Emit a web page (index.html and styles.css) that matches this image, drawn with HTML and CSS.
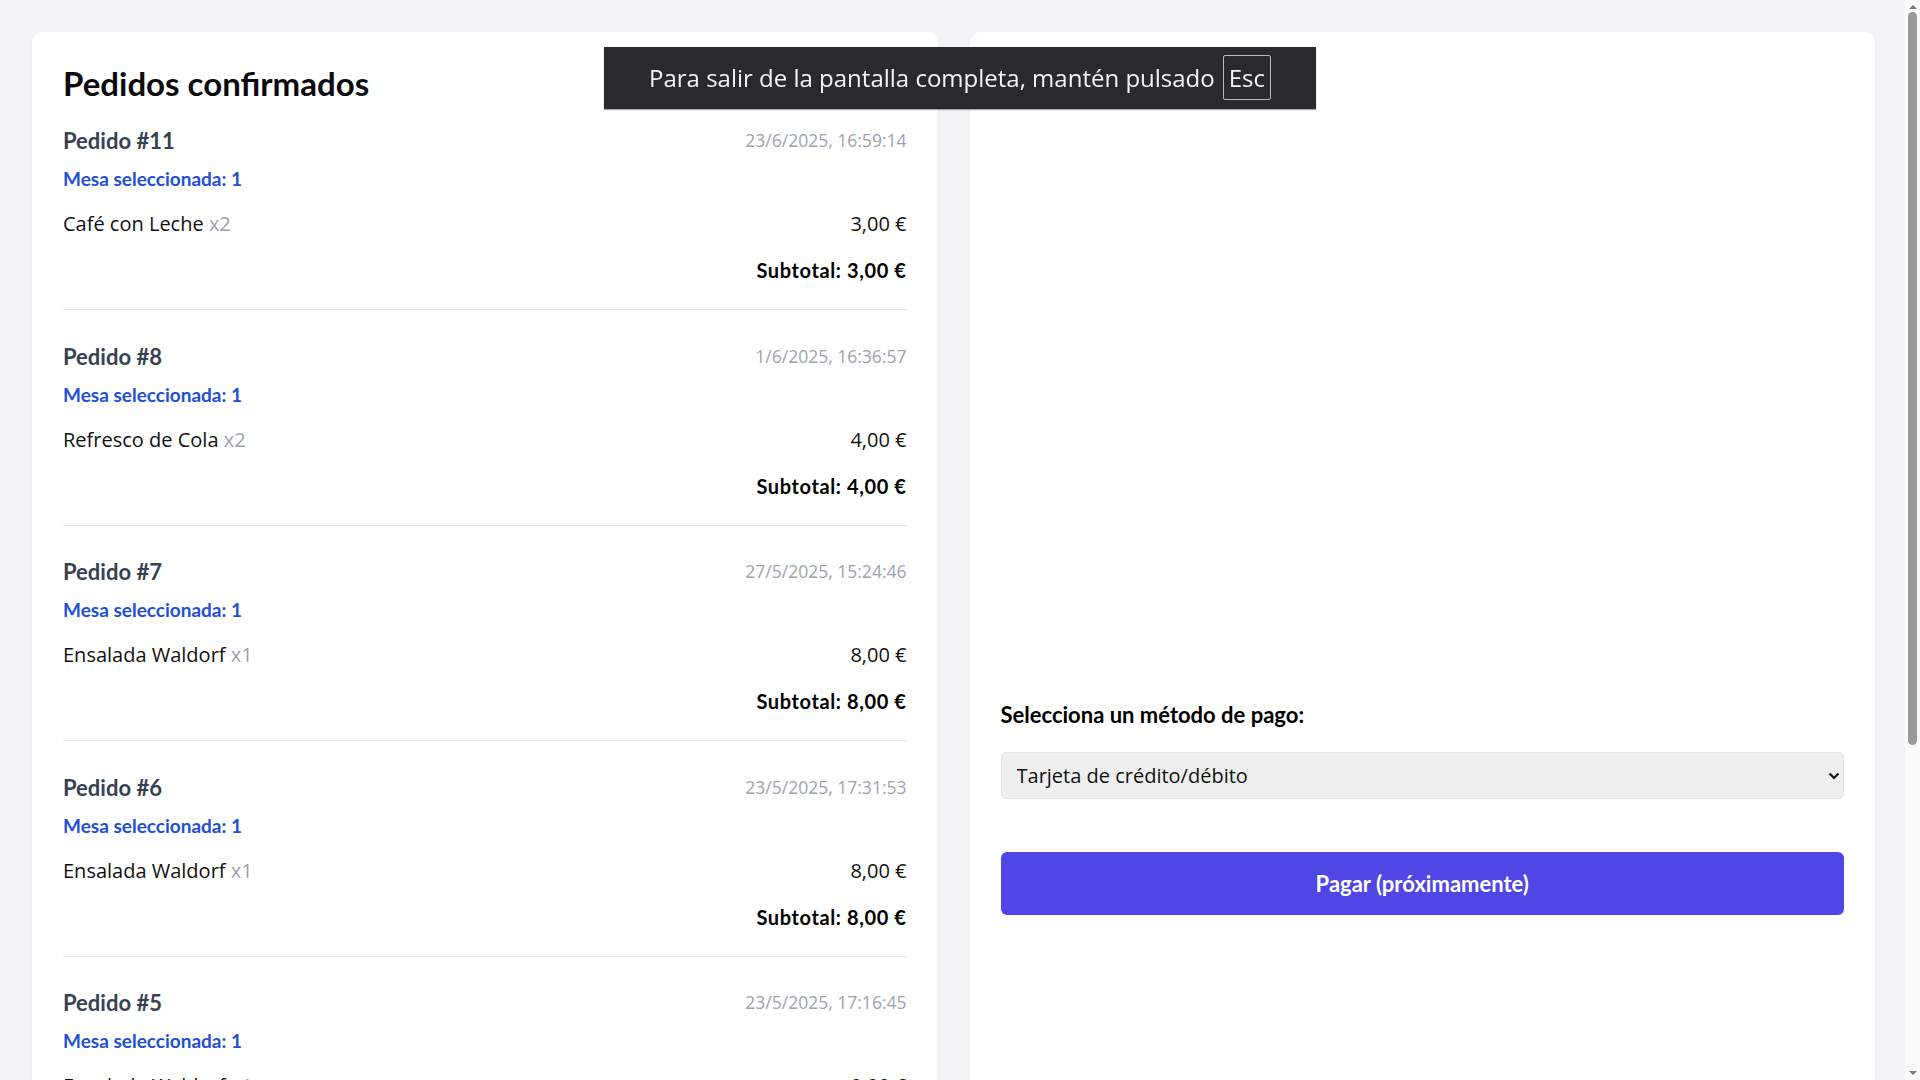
FILE: index.html
```html
<!DOCTYPE html>
<html lang="es">
<head>
    <meta charset="UTF-8">
    <meta name="viewport" content="width=device-width, initial-scale=1.0">
    <title>Pedidos confirmados</title>
    <link rel="stylesheet" href="styles.css">
</head>
<body>
    <div class="page">
        <section class="card orders">
            <h2 class="title">Pedidos confirmados</h2>

            <div class="order">
                <div class="order-head">
                    <span class="order-id">Pedido #11</span>
                    <span class="order-date">23/6/2025, 16:59:14</span>
                </div>
                <div class="order-table">Mesa seleccionada: 1</div>
                <div class="order-item">
                    <span>Café con Leche <span class="qty">x2</span></span>
                    <span>3,00 €</span>
                </div>
                <div class="order-subtotal">Subtotal: 3,00 €</div>
            </div>

            <div class="order">
                <div class="order-head">
                    <span class="order-id">Pedido #8</span>
                    <span class="order-date">1/6/2025, 16:36:57</span>
                </div>
                <div class="order-table">Mesa seleccionada: 1</div>
                <div class="order-item">
                    <span>Refresco de Cola <span class="qty">x2</span></span>
                    <span>4,00 €</span>
                </div>
                <div class="order-subtotal">Subtotal: 4,00 €</div>
            </div>

            <div class="order">
                <div class="order-head">
                    <span class="order-id">Pedido #7</span>
                    <span class="order-date">27/5/2025, 15:24:46</span>
                </div>
                <div class="order-table">Mesa seleccionada: 1</div>
                <div class="order-item">
                    <span>Ensalada Waldorf <span class="qty">x1</span></span>
                    <span>8,00 €</span>
                </div>
                <div class="order-subtotal">Subtotal: 8,00 €</div>
            </div>

            <div class="order">
                <div class="order-head">
                    <span class="order-id">Pedido #6</span>
                    <span class="order-date">23/5/2025, 17:31:53</span>
                </div>
                <div class="order-table">Mesa seleccionada: 1</div>
                <div class="order-item">
                    <span>Ensalada Waldorf <span class="qty">x1</span></span>
                    <span>8,00 €</span>
                </div>
                <div class="order-subtotal">Subtotal: 8,00 €</div>
            </div>

            <div class="order">
                <div class="order-head">
                    <span class="order-id">Pedido #5</span>
                    <span class="order-date">23/5/2025, 17:16:45</span>
                </div>
                <div class="order-table">Mesa seleccionada: 1</div>
                <div class="order-item">
                    <span>Ensalada Waldorf <span class="qty">x1</span></span>
                    <span>8,00 €</span>
                </div>
                <div class="order-subtotal">Subtotal: 8,00 €</div>
            </div>

            <div class="order">
                <div class="order-head">
                    <span class="order-id">Pedido #4</span>
                    <span class="order-date">23/5/2025, 16:58:02</span>
                </div>
                <div class="order-table">Mesa seleccionada: 1</div>
                <div class="order-item">
                    <span>Café con Leche <span class="qty">x1</span></span>
                    <span>1,50 €</span>
                </div>
                <div class="order-subtotal">Subtotal: 1,50 €</div>
            </div>
        </section>

        <section class="card payment">
            <div class="pay-spacer"></div>
            <label class="pay-label" for="metodo">Selecciona un método de pago:</label>
            <div class="select-wrap">
                <select class="pay-select" id="metodo">
                    <option>Tarjeta de crédito/débito</option>
                    <option>Efectivo</option>
                </select>
                <svg class="chevron" width="12" height="8" viewBox="0 0 12 8">
                    <path d="M1.5 1.5 L6 6 L10.5 1.5" fill="none" stroke="#111" stroke-width="2.2"/>
                </svg>
            </div>
            <button class="pay-btn">Pagar (próximamente)</button>
        </section>
    </div>

    <div class="fs-toast">
        <span>Para salir de la pantalla completa, mantén pulsado</span>
        <span class="key">Esc</span>
    </div>

    <div class="scrollbar">
        <span class="arrow up"></span>
        <span class="thumb"></span>
        <span class="arrow down"></span>
    </div>
</body>
</html>
```

FILE: styles.css
```css
* {
    box-sizing: border-box;
}
body {
    margin: 0;
    background-color: #f3f4f6;
    font-family: 'Open Sans', sans-serif;
    color: #111827;
}
.page {
    display: grid;
    grid-template-columns: 1fr 1fr;
    gap: 32px;
    padding: 32px 45px 32px 32px;
}
.card {
    background: #fff;
    border-radius: 10px;
    box-shadow: 0 1px 3px rgba(0, 0, 0, 0.06);
    padding: 30px 31px;
}
.title {
    margin: 0 0 18px;
    font-family: 'Lato', sans-serif;
    font-weight: 700;
    font-size: 33px;
    line-height: 43px;
    color: #0b0b0f;
}
.order {
    padding-bottom: 24px;
    border-bottom: 1px solid #e5e7eb;
    margin-bottom: 28.5px;
}
.order-head {
    display: flex;
    justify-content: space-between;
    align-items: center;
    height: 35px;
    margin-bottom: 6px;
}
.order-id {
    font-family: 'Lato', sans-serif;
    font-weight: 700;
    font-size: 22px;
    line-height: 35px;
    color: #374151;
}
.order-date {
    font-size: 17.5px;
    line-height: 25px;
    color: #9ca3af;
}
.order-table {
    font-family: 'Lato', sans-serif;
    font-weight: 700;
    font-size: 19px;
    line-height: 30px;
    color: #2150d6;
    margin-bottom: 15px;
}
.order-item {
    display: flex;
    justify-content: space-between;
    font-size: 20px;
    line-height: 30px;
    color: #111;
}
.qty {
    color: #9ca3af;
}
.order-subtotal {
    margin-top: 16px;
    text-align: right;
    font-family: 'Lato', sans-serif;
    font-weight: 700;
    font-size: 20px;
    line-height: 30px;
    letter-spacing: 0.03em;
    color: #000;
}
.payment {
    display: flex;
    flex-direction: column;
}
.pay-spacer {
    height: 634.5px;
}
.pay-label {
    display: block;
    font-family: 'Lato', sans-serif;
    font-weight: 700;
    font-size: 22px;
    line-height: 35px;
    color: #000;
    margin-bottom: 20.5px;
}
.select-wrap {
    position: relative;
}
.pay-select {
    display: block;
    width: 100%;
    height: 47px;
    appearance: none;
    -webkit-appearance: none;
    background: #efefef;
    border: 1px solid #e6e6e6;
    border-radius: 5px;
    padding: 0 15px;
    font-family: 'Open Sans', sans-serif;
    font-size: 20px;
    color: #111;
}
.chevron {
    position: absolute;
    right: 4px;
    top: 20px;
}
.pay-btn {
    margin-top: 53px;
    width: 100%;
    height: 63px;
    border: 0;
    border-radius: 6px;
    background: #4f46e5;
    color: #fff;
    font-family: 'Lato', sans-serif;
    font-weight: 700;
    font-size: 22px;
}
.fs-toast {
    position: fixed;
    top: 46.5px;
    left: 604px;
    width: 712px;
    height: 62.5px;
    display: flex;
    align-items: center;
    justify-content: center;
    gap: 8px;
    background: #292a2d;
    color: #f4f4f4;
    font-size: 24px;
    box-shadow: 0 1px 1px rgba(0, 0, 0, 0.35);
}
.key {
    height: 45px;
    line-height: 43px;
    padding: 0 5px;
    border: 1px solid #b8b8b8;
    border-radius: 2px;
}
.scrollbar {
    position: fixed;
    top: 0;
    right: 0;
    width: 15px;
    height: 100vh;
    background: #fafafa;
    display: flex;
    flex-direction: column;
    align-items: center;
}
.scrollbar .thumb {
    width: 9px;
    height: 733px;
    margin-top: 3px;
    border-radius: 5px;
    background: #9a9a9a;
}
.scrollbar .arrow {
    width: 0;
    height: 0;
    border-left: 4px solid transparent;
    border-right: 4px solid transparent;
    margin-top: 5px;
}
.scrollbar .up {
    border-bottom: 4px solid #7a7a7a;
}
.scrollbar .down {
    border-top: 4px solid #7a7a7a;
    margin-top: auto;
    margin-bottom: 5px;
}
```
